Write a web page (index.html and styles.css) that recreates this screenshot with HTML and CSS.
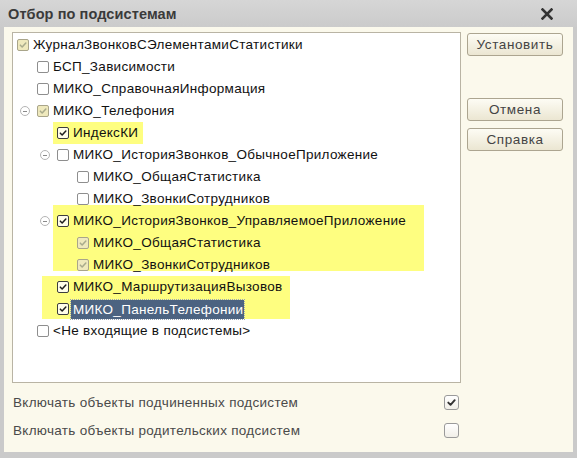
FILE: index.html
```html
<!DOCTYPE html>
<html lang="ru">
<head>
<meta charset="utf-8">
<title>Отбор по подсистемам</title>
<link rel="stylesheet" href="styles.css">
</head>
<body>
<div class="window">
  <div class="titlebar">
    <span class="title">Отбор по подсистемам</span>
    <svg class="close" width="12" height="12" viewBox="0 0 12 12"><path d="M1.5 1.5 L10.5 10.5 M10.5 1.5 L1.5 10.5" stroke="#333" stroke-width="2.6" stroke-linecap="square"/></svg>
  </div>
  <div class="content">
    <div class="top">
      <div class="tree">
        <div class="mark m1"></div>
        <div class="mark m2"></div>
        <div class="mark m3"></div>
        <div class="rows">
          <div class="row root"><span class="cb grey"><svg viewBox="0 0 12 12"><path d="M2.8 6.2 L5 8.4 L9.4 3.6"/></svg></span><span class="txt">ЖурналЗвонковСЭлементамиСтатистики</span></div>
          <div class="row l1"><span class="exp"></span><span class="cb"></span><span class="txt">БСП_Зависимости</span></div>
          <div class="row l1"><span class="exp"></span><span class="cb"></span><span class="txt">МИКО_СправочнаяИнформация</span></div>
          <div class="row l1"><span class="exp"><i class="minus"></i></span><span class="cb grey"><svg viewBox="0 0 12 12"><path d="M2.8 6.2 L5 8.4 L9.4 3.6"/></svg></span><span class="txt">МИКО_Телефония</span></div>
          <div class="row l2"><span class="exp"></span><span class="cb on"><svg viewBox="0 0 12 12"><path d="M2.8 6.2 L5 8.4 L9.4 3.6"/></svg></span><span class="txt">ИндексКИ</span></div>
          <div class="row l2"><span class="exp"><i class="minus"></i></span><span class="cb"></span><span class="txt">МИКО_ИсторияЗвонков_ОбычноеПриложение</span></div>
          <div class="row l3"><span class="exp"></span><span class="cb"></span><span class="txt">МИКО_ОбщаяСтатистика</span></div>
          <div class="row l3"><span class="exp"></span><span class="cb"></span><span class="txt">МИКО_ЗвонкиСотрудников</span></div>
          <div class="row l2"><span class="exp"><i class="minus"></i></span><span class="cb on"><svg viewBox="0 0 12 12"><path d="M2.8 6.2 L5 8.4 L9.4 3.6"/></svg></span><span class="txt">МИКО_ИсторияЗвонков_УправляемоеПриложение</span></div>
          <div class="row l3"><span class="exp"></span><span class="cb grey"><svg viewBox="0 0 12 12"><path d="M2.8 6.2 L5 8.4 L9.4 3.6"/></svg></span><span class="txt">МИКО_ОбщаяСтатистика</span></div>
          <div class="row l3"><span class="exp"></span><span class="cb grey"><svg viewBox="0 0 12 12"><path d="M2.8 6.2 L5 8.4 L9.4 3.6"/></svg></span><span class="txt">МИКО_ЗвонкиСотрудников</span></div>
          <div class="row l2"><span class="exp"></span><span class="cb on"><svg viewBox="0 0 12 12"><path d="M2.8 6.2 L5 8.4 L9.4 3.6"/></svg></span><span class="txt">МИКО_МаршрутизацияВызовов</span></div>
          <div class="row l2"><span class="exp"></span><span class="cb on"><svg viewBox="0 0 12 12"><path d="M2.8 6.2 L5 8.4 L9.4 3.6"/></svg></span><span class="txt sel">МИКО_ПанельТелефонии</span></div>
          <div class="row l1"><span class="exp"></span><span class="cb"></span><span class="txt">&lt;Не входящие в подсистемы&gt;</span></div>
        </div>
      </div>
      <div class="buttons">
        <button class="btn">Установить</button>
        <button class="btn cancel">Отмена</button>
        <button class="btn">Справка</button>
      </div>
    </div>
    <div class="opts">
      <div class="opt"><span class="lbl">Включать объекты подчиненных подсистем</span><span class="bigcb"><svg viewBox="0 0 15 15"><path d="M3.8 7.6 L6.4 10.2 L11.2 4.8"/></svg></span></div>
      <div class="opt"><span class="lbl">Включать объекты родительских подсистем</span><span class="bigcb"></span></div>
    </div>
  </div>
</div>
</body>
</html>
```
FILE: styles.css
```css
html, body {
  margin: 0;
  padding: 0;
}
body {
  font-family: "Liberation Sans", Arial, sans-serif;
  background: #c9c9c9;
}
.window {
  width: 577px;
  height: 458px;
  background: #cacaca;
  display: flex;
  flex-direction: column;
  box-sizing: border-box;
}
.titlebar {
  height: 27px;
  flex: none;
  display: flex;
  align-items: center;
  justify-content: space-between;
  padding: 0 24px 0 8px;
  background: linear-gradient(#d6d6d6, #cbcbcb);
}
.title {
  font-weight: bold;
  font-size: 14.5px;
  color: #3a3a3a;
  letter-spacing: 0.1px;
}
.close {
  width: 12px;
  height: 12px;
}
.content {
  flex: 1;
  margin: 0 4px 6px 4px;
  background: #fbf9ec;
  padding: 5px 0 0 8px;
  display: flex;
  flex-direction: column;
}
.top {
  display: flex;
  align-items: flex-start;
}
.tree {
  position: relative;
  width: 449px;
  height: 351px;
  box-sizing: border-box;
  border: 1px solid #b9b4a4;
  background: #ffffff;
  overflow: hidden;
}
.mark {
  position: absolute;
  background: #fefe80;
  z-index: 0;
}
.m1 { left: 40px; top: 89px; width: 90px; height: 22px; }
.m2 { left: 40px; top: 172px; width: 371px; height: 66px; }
.m3 { left: 29px; top: 243px; width: 248px; height: 43px; }
.rows {
  position: relative;
  z-index: 1;
  padding-top: 1px;
}
.row {
  height: 22px;
  display: flex;
  align-items: center;
  font-size: 13.5px;
  letter-spacing: 0.3px;
  color: #111;
  white-space: nowrap;
}
.root { padding-left: 4px; }
.l1 { padding-left: 4px; }
.l2 { padding-left: 24px; }
.l3 { padding-left: 44px; }
.exp {
  width: 20px;
  height: 12px;
  flex: none;
  display: flex;
  align-items: center;
}
.minus {
  width: 8px;
  height: 8px;
  border: 1px solid #b4b4b4;
  border-radius: 50%;
  margin-left: 3px;
  position: relative;
  background: #fff;
}
.minus::after {
  content: "";
  position: absolute;
  left: 2px;
  top: 3.5px;
  width: 4px;
  height: 1px;
  background: #8a8a8a;
}
.cb {
  width: 12px;
  height: 12px;
  box-sizing: border-box;
  border: 1px solid #8e8e8e;
  border-radius: 2px;
  background: #fff;
  flex: none;
  margin-right: 4px;
  display: flex;
}
.cb svg {
  width: 10px;
  height: 10px;
  fill: none;
  stroke-width: 1.8;
  stroke-linecap: round;
  stroke-linejoin: round;
}
.cb.on {
  border-color: #3d3d3d;
  background: #fffde8;
}
.cb.on svg path { stroke: #1e1e1e; }
.cb.grey {
  border-color: #a9a58a;
  background: #efe9bd;
}
.cb.grey svg path { stroke: #a9ab8c; }
.txt {
  line-height: 16px;
}
.sel {
  background: #4c6381;
  color: #fff;
  outline: 1px dotted #9aa6b5;
  padding: 0 1px 0 2px;
  margin-left: -2px;
  line-height: 19px;
}
.buttons {
  display: flex;
  flex-direction: column;
  margin-left: 6px;
  padding-top: 1px;
}
.btn {
  width: 96px;
  height: 23px;
  box-sizing: border-box;
  border: 1px solid #aca590;
  border-radius: 3px;
  background: linear-gradient(#fdfcf4, #ebe6d2);
  font-family: "Liberation Sans", Arial, sans-serif;
  font-size: 13.5px;
  letter-spacing: 0.6px;
  color: #444;
  padding: 0;
  margin-bottom: 7px;
}
.cancel {
  margin-top: 35px;
}
.opts {
  margin-top: 5px;
  width: 449px;
}
.opt {
  height: 28px;
  display: flex;
  align-items: center;
  justify-content: space-between;
  padding-left: 1px;
}
.lbl {
  font-size: 13.5px;
  letter-spacing: 0.3px;
  color: #4a4a4a;
}
.bigcb {
  width: 15px;
  height: 15px;
  box-sizing: border-box;
  border: 1px solid #9a9a9a;
  border-radius: 3px;
  background: linear-gradient(#ffffff, #f1efe8);
  margin-right: 2px;
  display: flex;
}
.bigcb svg {
  width: 13px;
  height: 13px;
  fill: none;
}
.bigcb svg path {
  stroke: #333;
  stroke-width: 2.2;
  stroke-linecap: round;
  stroke-linejoin: round;
}
```
